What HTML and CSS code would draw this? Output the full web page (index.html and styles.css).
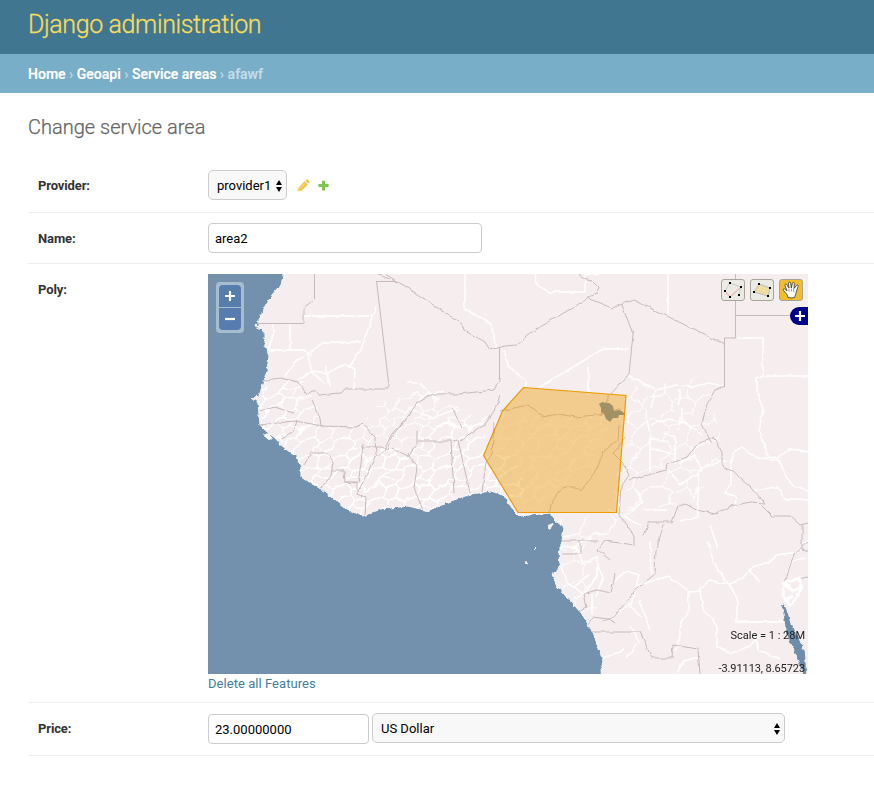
FILE: index.html
```html
<!DOCTYPE html>
<html lang="en">
<head>
<meta charset="utf-8">
<title>Change service area | Django administration</title>
<link rel="stylesheet" href="styles.css">
</head>
<body>
<header class="header"><h1>Django administration</h1></header>
<nav class="breadcrumbs"><a>Home</a> › <a>Geoapi</a> › <a>Service areas</a> › <span>afawf</span></nav>
<main class="content">
  <h2>Change service area</h2>
  <form>
    <div class="row row-provider">
      <label>Provider:</label>
      <div class="select select-provider"><span>provider1</span><svg class="arrows" width="6" height="12" viewBox="0 0 6 12"><path d="M0 5L3 0l3 5zM0 7h6l-3 5z"/></svg></div>
      <svg class="edit" width="13" height="13" viewBox="0 0 13 13"><path fill="#efc445" d="M0.5 12.5L1.3 9 7.6 2.300l3.300 3.200-6.500 6.300zM8.400 1.700l1-1c.5-.5 1.100-.4 1.500 0l1.500 1.500c.4.400.4 1 0 1.400l-1 1z"/><path stroke="#fff" stroke-width=".5" d="M2.8 9.500l5-5M1.400 10.300l1.500 1.400"/></svg>
      <svg class="add" width="11" height="11" viewBox="0 0 11 11"><path fill="#82c34f" d="M4 .7h3v3.400h3.600v3H7v3.500H4V7.100H.4v-3H4z"/></svg>
    </div>
    <div class="row">
      <label>Name:</label>
      <div class="input input-name">area2</div>
    </div>
    <div class="row row-poly">
      <label>Poly:</label>
      <div class="poly">
        <div class="map">
          <svg class="tiles" width="600" height="400" viewBox="208 274 600 400">
            <defs>
              <filter id="rough" color-interpolation-filters="sRGB" filterUnits="userSpaceOnUse" x="200" y="264" width="620" height="420">
                <feTurbulence type="fractalNoise" baseFrequency=".07" numOctaves="2" seed="4" result="n"/>
                <feDisplacementMap in="SourceGraphic" in2="n" scale="10" xChannelSelector="R" yChannelSelector="G"/>
              </filter>
              <filter id="fine" color-interpolation-filters="sRGB" filterUnits="userSpaceOnUse" x="200" y="264" width="620" height="420">
                <feTurbulence type="fractalNoise" baseFrequency=".22" numOctaves="2" seed="9" result="n"/>
                <feDisplacementMap in="SourceGraphic" in2="n" scale="4" xChannelSelector="R" yChannelSelector="G"/>
              </filter>
              <filter id="line" color-interpolation-filters="sRGB" filterUnits="userSpaceOnUse" x="200" y="264" width="620" height="420">
                <feTurbulence type="fractalNoise" baseFrequency=".13" numOctaves="1" seed="9" result="n"/>
                <feDisplacementMap in="SourceGraphic" in2="n" scale="4" xChannelSelector="R" yChannelSelector="G"/>
              </filter>
              <pattern id="cells" width="34" height="30" patternUnits="userSpaceOnUse">
                <path fill="none" stroke="#fff" stroke-width="1.5" d="M0 6l7-3 5 5 9-3 6 4 7-3M7 3V0M12 8l-3 8 6 5 8-3 3-9M21 5l2-5M9 16l-9 2M15 21l-3 6 4 3M23 18l6 4 5-4M29 22l-2 6-4 2M12 27l-5 3M23 30l-7 0"/>
              </pattern>
              <pattern id="cells-large" width="54" height="46" patternUnits="userSpaceOnUse">
                <path fill="none" stroke="#fff" stroke-width="1.3" d="M0 9l12-4 9 8 14-6 10 6 9-4M12 5V0M21 13l-5 13 9 8 13-5 7-16M35 7V0M16 26L0 28M25 34l-4 8 6 4M38 29l9 6 7-7M47 35l-4 9-8 2M21 42l-9 4"/>
              </pattern>
              <clipPath id="land"><path d="M283 274L280 284 271 295 263 309 257 323 257 329 264 332 265 346 268 356 266 371 262 384 258 396 252 398 256 401 260 407 259 425 266 431 275 438 286 450 296 456 300 468 305 480 321 488 336 500 346 509 363 516 381 509 408 506 428 511 451 501 471 494 491 491 505 496 511 508 519 516 551 513 553 518 563 528 561 541 558 554 556 571 551 574 556 586 565 596 581 614 590 629 595 641 602 661 600 669 601 674H808V274z"/></clipPath>
            </defs>
            <rect x="208" y="274" width="600" height="400" fill="#7391ad"/>
            <path class="coast" filter="url(#fine)" d="M284 264V274L281 284 272 295 264 309 258 323 258 330 255 325 265 333 265 346 269 356 267 371 263 384 259 396 252 398 258 403 260 425 266 431 275 438 286 450 297 456 301 468 301 477 307 481 321 489 336 500 346 509 363 516 381 509 408 506 428 511 451 501 471 494 491 491 505 496 511 508 519 516 551 513 553 518 564 528 562 541 559 554 560 564 557 571 552 574 557 586 566 596 582 614 591 629 596 641 603 661 601 669 602 684H818V264z"/>
            <g clip-path="url(#land)">
              <g filter="url(#rough)">
                <path fill="url(#cells)" d="M260 386l43-5 15 27 2 18 33 0 8 22 20-3 17 5 30-18 30-15 30-6-4 46 24-2 22 35-20 14-150 36-60-30-40-66z"/>
                <path fill="url(#cells)" opacity=".75" d="M385 400l35-10 48 22 12 10-10 73-42 18-26-10-60 12-8-64z"/>
                <path fill="url(#cells)" opacity=".45" d="M500 412h45l32 4 40-3-19 40-18 40-24-5-8 20-28 4-24-24-12-36z"/>
                <path fill="url(#cells-large)" opacity=".8" d="M624 390l85-12 13 70-20 50-80 22-28 30 6 70-36-20-6-80 56-5z"/>
              </g>
              <g class="admin" filter="url(#line)">
                <path d="M304 316h69M376 306l-15 44-12 17M324 342h37M268 350h36l8 6M273 324v12l-5 14M290 324v25M324 342l-18 13-12 8-9 13M308 355l4 16 16 2 16-9 11 5-1 20M326 366l4 20M298 380l13-8 15 12M465 274v35l26 15 5 24M534 274l4 12 12 6h35V275l16-2M504 350l4 16 18 15v7M538 388l15-9 30-18 20-12h25M588 367v28M668 274v40M628 375l28 15 20-5 15 2 18-4 15 3M656 390l-5 18M679 389v16M738 338h25v38h45M763 376l-6 3v14l6 16M408 382l13 2 10 10 12-3M408 408l25 10 25-10"/>
                <path d="M645 408l5 26v38M650 425l19-6 17 4 16 12M682 408l-4 22M665 432l10 6v26M650 448l23 6M763 408l-4 24 9 24 10 2 10-8 20 2M731 465l3-14 8-4 14 10 22 3 8 15 8 12 14 4M754 490l24-3 6 12h15l9 1M669 470l12 15 6-5 15-10-7-15-16 8M702 468l24-8M731 460v24l-5 8 10 5-1 11M698 472v45l-18 4M635 488l8 15-14 8M643 510h24M609 510l31 15M710 525l3 9 5 14"/>
                <path d="M635 586l34-10 21 16 10-1 8-10 22 3 12-5 10-12 16-4 8-8 22-3 10-12M708 541l4 20 18 25 7 11v25h51M700 591l3 18 14 17v20l14 8 18-8 15-14M689 593l-1 22-7 8-2 20-4 9M609 620l20-15 12 12M609 585l18-14 12 4-8 30M640 600l10 30M650 541l1 33M750 570l10 12M753 631l7 20 20 8M676 674l8-13 14-4M787 574l4-12 14-5"/>
                <path d="M558 548l17-2 8 17 14-6v20l-13 17-18-12-5-16M575 586l14-12M597 565l6 12-7 20M572 548l20-10M592 594v20M631 625l7 16-11 18M624 650l-20 8"/>
              </g>
              <g class="border" filter="url(#line)">
                <path d="M385 274l23 14 54 36 2 6 21 12 5 8 15-4 12-1 20-16 60-36 2-5-8-8-9-2-7-10M304 324v-17l9-6M388 382v7h-43l-5 4-20 2-4-5-9 5-9-13-17-4-21 3-3 7M377 274l20 8M499 378v3l-5 9-35 4-25 0-17 9-8 12-18 20-7 16-9 8"/>
                <path d="M587 298l25 10 22-8 90 44M724 386l-9 4-8 14-5 20 10 20M622 305l11 29-4 40-20 22-9 20M312 400l8 18 1 8 38 1 3-4 13 14 1 18-12 25-8 15M259 425l36-4 28 5M259 411l16-4 18 6M297 420l-3 12-14 8M304 465l7-12 16 0 6 8-2 15-10 12M332 470h12l1 12 13 1 3-20 2-19M344 482h13v12l9 4-1 18M361 447h21l5 3 4-12 15-20M392 448l16 8 9-11v-14M408 453l9 14-3 21 10 25M418 441h33l3 52M454 441l4-1 12 53M460 441l8-6 18-12 8-12 6-15M452 408l10 20M494 422l-2 32-6 8-4 30M550 513l1-10 12-16 13 0 5 4 16-22 6-17 15-12 1-15"/>
                <path d="M500 411l28-6 15 12 15-3 18 3 30-3 15-5M625 438l-12 15 9 9 7 13-8 12-2 28 15 20 0 9M629 480l37-10 1-5 20-8 9-12 10-5 7-3 9 15v14l10 5 18 16 15 16-15-1-19 4-15 8-20-4-10-6-8 2-6 16h-23l-5 14M664 524l-8 26-1 24-20 16-20 26-13 6M762 506l10 10h18l10 9 8-2M802 525v25l8 2M562 541h36M562 554h18V541M605 541l-7 9 12 10M605 541l30 4M583 594l14-4 14 3 4-19M583 594l3 13-8 4M584 627l9-10 15 2 7 4M590 632h50l12 26 20 0 1-13 25 4 2 25M808 542l-14 12-5 15-6 22M790 580l18-3"/>
              </g>
              <path class="border" d="M314.500 274v25M303.500 323.500H258M376 281.500h20M376.500 281l12 101M499.500 348v31M735.500 274v64h-11v49M735.500 315.500H808"/>
            </g>
            <g filter="url(#fine)"><path fill="#f5eeee" d="M548 525l5-2-1 5-4 1zM534 546h2v3h-2zM525 562l3-1v3l-3 1z"/><path fill="#fff" d="M264 435l5-2 4 7-7-2zM276 437l4-2 4 8z"/><path fill="none" stroke="#fff" stroke-width="3" d="M782 584l17-6 2 8-8 5-8-8-2 13 8 10 11-18M784 602l8-6"/><path fill="#6e8da9" stroke="#6e8da9" stroke-width="2" d="M783 604l4 10 3 12 8 14 6 13 1 21-3-6-7-19-8-17-2-16z"/></g>
            <path fill="#6e8da9" d="M599 404l3-2 4 1 3 0 4 3 1 5 5-1 4 2 2 3-6 0-1 3-5 0-3 4-4-3-2-5-3-2 0-4z"/>
            <path fill="#ee9900" fill-opacity=".4" stroke="#ee9900" stroke-width="1.2" d="M523.500 387.500L626 395.500 616.500 512.500H518L483.500 455.500 502.500 411z"/>
          </svg>
          <div class="zoom"><span class="zoom-in"><svg width="12" height="12"><path d="M1 6h10M6 1v10"/></svg></span><span class="zoom-out"><svg width="12" height="12"><path d="M1 6h10"/></svg></span></div>
          <div class="tools">
            <svg width="24" height="22" viewBox="0 0 24 22"><rect class="tool" x=".5" y=".5" width="23" height="21" rx="2.500"/><path d="M4 12l5-8 11 4-2 8" fill="none" stroke="#ccc"/><path d="M4 12l5 6 11-10" fill="none" stroke="#f49a92"/><path d="M3 11h2v2H3zM8 3h2v2H8zM19 7h2v2h-2zM8 17h2v2H8zM17 15h2v2h-2z"/></svg>
            <svg width="24" height="22" viewBox="0 0 24 22"><rect class="tool" x=".5" y=".5" width="23" height="21" rx="2.500"/><path d="M9 5l11 4-2 8-14-4z" fill="#f0dda4" stroke="#bbb"/><path d="M8 4h2v2H8zM19 8h2v2h-2zM17 16h2v2h-2zM3 12h2v2H3z"/></svg>
            <svg width="24" height="22" viewBox="0 0 24 22"><rect class="tool tool-on" x=".5" y=".5" width="23" height="21" rx="2.500"/><path fill="#fff" stroke="#333" stroke-width=".8" stroke-linejoin="round" d="M9 18.500l-1-3-3.500-4c-1-1.500.8-2.500 2-1l1.500 1.300L6 6.500c-.4-1.500 1.300-2 1.900-.6L10 9l-.6-4.800c0-1.500 1.900-1.500 2.200 0L12.300 9l1.100-4.700c.4-1.500 2.300-1 2 .5L15 9.500l2.400-3c.9-1.200 2.300-.3 1.700 1L17.500 12l-.9 3.500L15.500 18.500q-3 1-6.500 0z"/><path stroke="#555" stroke-width=".6" d="M10 9.500v3M12.400 9.500v3M14.700 10v3"/></svg>
          </div>
          <div class="layers"><svg width="12" height="12"><path d="M1 6h10M6 1v10"/></svg></div>
          <div class="scale">Scale = 1 : 28M</div>
          <div class="position">-3.91113, 8.65723</div>
        </div>
        <a class="delete">Delete all Features</a>
      </div>
    </div>
    <div class="row row-price">
      <label>Price:</label>
      <div class="input input-price">23.00000000</div>
      <div class="select select-currency"><span>US Dollar</span><svg class="arrows" width="6" height="12" viewBox="0 0 6 12"><path d="M0 5L3 0l3 5zM0 7h6l-3 5z"/></svg></div>
    </div>
  </form>
</main>
</body>
</html>
```
FILE: styles.css
```css
* { box-sizing: border-box; }
body { margin: 0; background: #fff; color: #333; font: 13px/16px Roboto, "Liberation Sans", sans-serif; overflow: hidden; }
.header { height: 54px; padding: 10px 28px; background: #417690; }
.header h1 { margin: 0; color: #f5dd5d; font-size: 25px; letter-spacing: -.38px; line-height: 30px; font-weight: 300; white-space: nowrap; -webkit-text-stroke: .3px #f5dd5d; }
.breadcrumbs { height: 39px; padding: 12px 28px; background: #79aec8; color: #c4dce8; font-size: 14px; font-weight: 500; white-space: nowrap; }
.breadcrumbs a { color: #fff; -webkit-text-stroke: .2px #fff; }
.breadcrumbs span { -webkit-text-stroke: .2px #c4dce8; }
.content { padding: 22px 0 0 28px; }
.content h2 { margin: 0 0 20px; color: #666; font-size: 20px; line-height: 24px; font-weight: 300; -webkit-text-stroke: .25px #666; }
.row { display: flex; align-items: flex-start; height: 51px; padding: 10px; border-bottom: 1px solid #eee; }
.row-provider { height: 54px; padding-top: 11px; }
.row label { width: 170px; flex: none; line-height: 31px; font-weight: 700; letter-spacing: -.12px; color: #333; }
.input, .select { display: flex; align-items: center; height: 30px; padding: 1px 6px 0; border: 1px solid #ccc; border-radius: 4px; background: #fff; color: #000; line-height: 29px; }
.select { justify-content: space-between; padding: 1px 4px 0 8px; border-radius: 5px; background: #f8f8f8; }
.select-provider { width: 79px; }
.edit { margin: 9px 0 0 10px; }
.add { margin: 10px 0 0 8px; }
.input-name { width: 274px; }
.row-poly { height: 439px; }
.poly { width: 600px; }
.map { position: relative; width: 600px; height: 400px; overflow: hidden; }
.tiles { display: block; }
.coast { fill: #f5edee; stroke: #faf6f8; stroke-width: 1; }
.admin { fill: none; stroke: #fff; stroke-width: 1.5; }
.border { fill: none; stroke: #c8b9bc; stroke-width: 1; }
.zoom { position: absolute; left: 8px; top: 8px; width: 28px; padding: 3px; border-radius: 4px; background: #a8bccf; }
.zoom span { display: grid; place-items: center; height: 22px; background: #567dae; }
.zoom .zoom-in { margin-bottom: 1px; border-radius: 4px 4px 0 0; }
.zoom .zoom-out { border-radius: 0 0 4px 4px; }
.zoom path, .layers path { fill: none; stroke: #fff; stroke-width: 2.2; }
.tools { position: absolute; right: 5px; top: 5px; display: flex; gap: 5px; }
.tool { fill: #eaebe4; stroke: #a6a598; stroke-width: 1; }
.tool-on { fill: #efbd2d; }
.layers { position: absolute; right: 0; top: 33px; width: 18px; height: 18px; padding: 3px 2px 3px 4px; border-radius: 9px 0 0 9px; background: #00008b; }
.layers svg { display: block; }
.scale, .position { position: absolute; right: 3px; font-size: 11px; line-height: 14px; color: #222; }
.scale { bottom: 31px; }
.position { bottom: -2px; letter-spacing: -.08px; }
.delete { display: block; line-height: 20px; color: #447e9b; letter-spacing: .05px; }
.row-price { height: 53px; }
.row-price label { line-height: 32px; }
.input-price { width: 161px; margin-top: 1px; }
.select-currency { width: 413px; margin-left: 3px; }
```
